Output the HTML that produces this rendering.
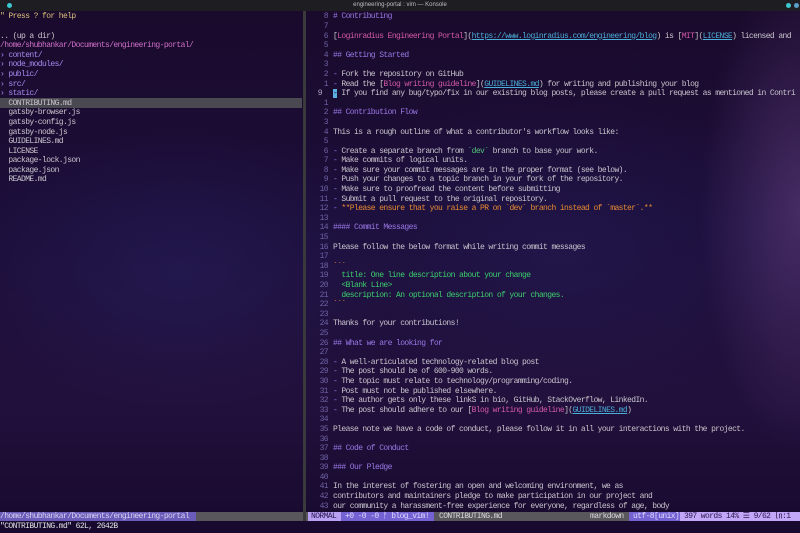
<!DOCTYPE html>
<html><head><meta charset="utf-8"><style>
*{margin:0;padding:0;box-sizing:border-box}
html,body{width:800px;height:533px;overflow:hidden;background:#1a0b30}
body{position:relative;font-family:"Liberation Mono",monospace;font-size:8px;letter-spacing:-0.6px;color:#c8c4cc}
#bg{position:absolute;left:0;top:11px;width:800px;height:522px;
background:
radial-gradient(ellipse 100px 240px at 800px 200px,rgba(120,80,150,.45),rgba(0,0,0,0)),
radial-gradient(ellipse 220px 140px at 180px 260px,rgba(40,35,100,.45),rgba(0,0,0,0)),
radial-gradient(ellipse 260px 160px at 560px 240px,rgba(40,35,100,.35),rgba(0,0,0,0)),
linear-gradient(180deg,#1a0a2c 0%,#1c0e3a 40%,#22103c 75%,#170a2e 100%)}
#title{position:absolute;left:0;top:0;width:800px;height:11px;background:#1e1d22;color:#bdbdbd;font-family:"Liberation Sans",sans-serif;font-size:6px;letter-spacing:0;line-height:11px;text-align:center}
.dot{position:absolute;top:3px;width:5px;height:5px;border-radius:50%;background:#3cc8d0}
.rows{position:absolute;line-height:9.6px}
.r{height:9.6px;white-space:pre}
.n{display:inline-block;width:28px;text-align:right;color:#6e62a4;margin-right:5px}
.h{color:#9a78e6}.pk{color:#d45aa8}.u{color:#4aaed8;text-decoration:underline}.g{color:#3ccf6c}.o{color:#e88a30}.dv{color:#52c07a}
.dir{color:#a68af0}.path{color:#d070c8}.y{color:#d8c27a}
#split{position:absolute;left:303px;top:11px;width:3px;height:501px;background:#3a3a3c}
.sl{position:absolute;top:512px;height:9px;line-height:9px;white-space:pre}
</style></head><body>
<div id="bg"></div>
<div id="title">engineering-portal : vim — Konsole</div>
<div class="dot" style="left:7px;background:#3cc8d0"></div>
<div class="dot" style="left:786px"></div><div class="dot" style="left:794px;background:#5aa0c8"></div>
<div id="split"></div>
<div style="position:absolute;left:0;top:98.4px;width:302px;height:9.6px;background:#4a4850"></div>
<div class="rows" style="left:0;top:12.4px">
<div class="r y">" Press ? for help</div>
<div class="r"> </div>
<div class="r">.. (up a dir)</div>
<div class="r path">/home/shubhankar/Documents/engineering-portal/</div>
<div class="r dir">› content/</div>
<div class="r dir">› node_modules/</div>
<div class="r dir">› public/</div>
<div class="r dir">› src/</div>
<div class="r dir">› static/</div>
<div class="r">  CONTRIBUTING.md</div>
<div class="r">  gatsby-browser.js</div>
<div class="r">  gatsby-config.js</div>
<div class="r">  gatsby-node.js</div>
<div class="r">  GUIDELINES.md</div>
<div class="r">  LICENSE</div>
<div class="r">  package-lock.json</div>
<div class="r">  package.json</div>
<div class="r">  README.md</div>
</div>
<div class="rows" style="left:300px;top:12.4px">
<div class="r"><span class="n">8</span><span class="h"># Contributing</span></div>
<div class="r"><span class="n">7</span></div>
<div class="r"><span class="n">6</span>[<span class="pk">Loginradius Engineering Portal</span>](<span class="u">https://www.loginradius.com/engineering/blog</span>) is [<span class="pk">MIT</span>](<span class="u">LICENSE</span>) licensed and</div>
<div class="r"><span class="n">5</span></div>
<div class="r"><span class="n">4</span><span class="h">## Getting Started</span></div>
<div class="r"><span class="n">3</span></div>
<div class="r"><span class="n">2</span><span class="h">-</span> Fork the repository on GitHub</div>
<div class="r"><span class="n">1</span><span class="h">-</span> Read the [<span class="pk">Blog writing guideline</span>](<span class="u">GUIDELINES.md</span>) for writing and publishing your blog</div>
<div class="r"><span class="n" style="color:#b0a8c8;width:22px;margin-right:11px">9</span><span style="background:#5ab0e0;color:#1a0b30">-</span> If you find any bug/typo/fix in our existing blog posts, please create a pull request as mentioned in Contri</div>
<div class="r"><span class="n">1</span></div>
<div class="r"><span class="n">2</span><span class="h">## Contribution Flow</span></div>
<div class="r"><span class="n">3</span></div>
<div class="r"><span class="n">4</span>This is a rough outline of what a contributor's workflow looks like:</div>
<div class="r"><span class="n">5</span></div>
<div class="r"><span class="n">6</span><span class="h">-</span> Create a separate branch from <span class="dv">&#96;dev&#96;</span> branch to base your work.</div>
<div class="r"><span class="n">7</span><span class="h">-</span> Make commits of logical units.</div>
<div class="r"><span class="n">8</span><span class="h">-</span> Make sure your commit messages are in the proper format (see below).</div>
<div class="r"><span class="n">9</span><span class="h">-</span> Push your changes to a topic branch in your fork of the repository.</div>
<div class="r"><span class="n">10</span><span class="h">-</span> Make sure to proofread the content before submitting</div>
<div class="r"><span class="n">11</span><span class="h">-</span> Submit a pull request to the original repository.</div>
<div class="r"><span class="n">12</span><span class="h">-</span> <span class="o">**Please ensure that you raise a PR on &#96;dev&#96; branch instead of &#96;master&#96;.**</span></div>
<div class="r"><span class="n">13</span></div>
<div class="r"><span class="n">14</span><span class="h">#### Commit Messages</span></div>
<div class="r"><span class="n">15</span></div>
<div class="r"><span class="n">16</span>Please follow the below format while writing commit messages</div>
<div class="r"><span class="n">17</span></div>
<div class="r"><span class="n">18</span><span class="o">&#96;&#96;&#96;</span></div>
<div class="r"><span class="n">19</span><span class="g">  title: One line description about your change</span></div>
<div class="r"><span class="n">20</span><span class="g">  &lt;Blank Line&gt;</span></div>
<div class="r"><span class="n">21</span><span class="g">  description: An optional description of your changes.</span></div>
<div class="r"><span class="n">22</span><span class="o">&#96;&#96;&#96;</span></div>
<div class="r"><span class="n">23</span></div>
<div class="r"><span class="n">24</span>Thanks for your contributions!</div>
<div class="r"><span class="n">25</span></div>
<div class="r"><span class="n">26</span><span class="h">## What we are looking for</span></div>
<div class="r"><span class="n">27</span></div>
<div class="r"><span class="n">28</span><span class="h">-</span> A well-articulated technology-related blog post</div>
<div class="r"><span class="n">29</span><span class="h">-</span> The post should be of 600-900 words.</div>
<div class="r"><span class="n">30</span><span class="h">-</span> The topic must relate to technology/programming/coding.</div>
<div class="r"><span class="n">31</span><span class="h">-</span> Post must not be published elsewhere.</div>
<div class="r"><span class="n">32</span><span class="h">-</span> The author gets only these linkS in bio, GitHub, StackOverflow, LinkedIn.</div>
<div class="r"><span class="n">33</span><span class="h">-</span> The post should adhere to our [<span class="pk">Blog writing guideline</span>](<span class="u">GUIDELINES.md</span>)</div>
<div class="r"><span class="n">34</span></div>
<div class="r"><span class="n">35</span>Please note we have a code of conduct, please follow it in all your interactions with the project.</div>
<div class="r"><span class="n">36</span></div>
<div class="r"><span class="n">37</span><span class="h">## Code of Conduct</span></div>
<div class="r"><span class="n">38</span></div>
<div class="r"><span class="n">39</span><span class="h">### Our Pledge</span></div>
<div class="r"><span class="n">40</span></div>
<div class="r"><span class="n">41</span>In the interest of fostering an open and welcoming environment, we as</div>
<div class="r"><span class="n">42</span>contributors and maintainers pledge to make participation in our project and</div>
<div class="r"><span class="n">43</span>our community a harassment-free experience for everyone, regardless of age, body</div>
</div>
<div class="sl" style="left:0;width:196px;background:#6a5cb8;color:#d8d0f0">/home/shubhankar/Documents/engineering-portal</div>
<div class="sl" style="left:196px;width:107px;background:#59575c"></div>
<div class="sl" style="left:303px;width:3px;background:#3a3a3c"></div>
<div class="sl" style="left:306px;width:2px;background:#59575c"></div>
<div class="sl" style="left:308px;width:33px;background:#b9a0f2;color:#2a1a50;padding-left:3px">NORMAL</div>
<div class="sl" style="left:341px;width:93px;background:#7462d2;color:#e0d8ff;padding-left:4px">+0 -0 -0 ᚠ blog_vim!</div>
<div class="sl" style="left:434px;width:195px;background:#59575c;color:#d8d8d8;padding-left:5px">CONTRIBUTING.md</div>
<div class="sl" style="left:590px;width:39px;color:#d8d8d8">markdown</div>
<div class="sl" style="left:629px;width:51px;background:#7462d2;color:#e0d8ff;padding-left:4px">utf-8[unix]</div>
<div class="sl" style="left:680px;width:120px;background:#c2a6f8;color:#2a1a50;padding-left:4px">397 words 14% ☰ 9/62 ㏑:1</div>
<div style="position:absolute;left:0;top:522px;line-height:10px;color:#e0e0e0;white-space:pre">"CONTRIBUTING.md" 62L, 2642B</div>
</body></html>
